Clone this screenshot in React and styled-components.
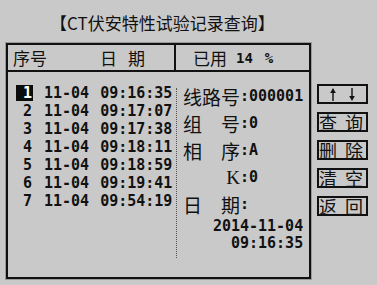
import React from 'react';
import styled, { createGlobalStyle } from 'styled-components';

const CJK = `"Noto Sans CJK SC", "Noto Sans", sans-serif`;
const MONO = `"DejaVu Sans Mono", "Liberation Mono", monospace`;
const SERIF = `"Liberation Serif", "Noto Sans CJK SC", serif`;

const GlobalStyle = createGlobalStyle`
  html, body { margin: 0; padding: 0; background: #c9c9c9; }
  body { width: 377px; height: 285px; overflow: hidden; color: #111; font-family: ${CJK}; }
`;

const Screen = styled.div`
  width: 377px;
  height: 285px;
  display: flex;
  flex-direction: column;
`;

const Title = styled.h1`
  margin: 0;
  height: 43px;
  box-sizing: border-box;
  padding: 2px 0 0 50px;
  display: flex;
  align-items: center;
  font: 400 17px/20px ${CJK};
  white-space: nowrap;
`;

const Body = styled.div`
  display: flex;
  align-items: flex-start;
  padding-left: 6px;
`;

const Panel = styled.div`
  width: 305px;
  height: 236px;
  box-sizing: border-box;
  border: 2px solid #111;
  box-shadow: 0 0 0 1px #9a9a9a;
  display: flex;
  flex-direction: column;
`;

const Header = styled.div`
  flex: none;
  display: flex;
  height: 27px;
  box-sizing: border-box;
  border-bottom: 2px solid #111;
`;

const HeadCell = styled.div`
  display: flex;
  align-items: center;
  box-sizing: border-box;
  width: ${p => p.$w || 'auto'};
  flex: ${p => (p.$w ? 'none' : '1')};
  padding-left: ${p => p.$pad}px;
  border-right: ${p => (p.$divider ? '2px solid #111' : 'none')};
  font: 400 17px/1 ${CJK};
  white-space: nowrap;
`;

const HeadText = styled.span`
  margin-left: ${p => p.$ml || 0}px;
`;

const Usage = styled.span`
  font: 700 14px/1 ${MONO};
  margin-left: ${p => p.$ml || 0}px;
`;

const Content = styled.div`
  flex: 1;
  display: flex;
  align-items: flex-start;
`;

const List = styled.div`
  width: 168px;
  flex: none;
  box-sizing: border-box;
  padding: 12px 0 0 8px;
  display: flex;
  flex-direction: column;
`;

const Row = styled.div`
  height: 18px;
  display: flex;
  align-items: center;
  font: 700 15px/1 ${MONO};
  white-space: nowrap;
`;

const Num = styled.span`
  width: 17px;
  height: 16px;
  display: flex;
  align-items: center;
  justify-content: flex-end;
  padding-right: 1px;
  box-sizing: border-box;
  background: ${p => (p.$sel ? '#0c0c0c' : 'transparent')};
  color: ${p => (p.$sel ? '#fff' : '#111')};
`;

const Cell = styled.span`
  margin-left: 11px;
`;

const Divider = styled.div`
  flex: none;
  width: 0;
  height: 170px;
  margin-top: 16px;
  border-left: 1px dotted #555;
`;

const Info = styled.div`
  flex: 1;
  box-sizing: border-box;
  padding: 11px 7px 0 6px;
  display: flex;
  flex-direction: column;
`;

const Field = styled.div`
  height: 27px;
  display: flex;
  align-items: center;
`;

const Label = styled.span`
  width: 57px;
  display: flex;
  justify-content: ${p => (p.$end ? 'flex-end' : 'space-between')};
  font: 400 19px/1 ${p => (p.$serif ? SERIF : CJK)};
`;

const Colon = styled.span`
  width: 9px;
  font: 700 15px/1 ${MONO};
`;

const Value = styled.span`
  font: 700 15px/1 ${MONO};
`;

const DateLine = styled.div`
  height: 17px;
  text-align: right;
  font: 700 15px/17px ${MONO};
`;

const Buttons = styled.div`
  margin: 41px 0 0 6px;
  display: flex;
  flex-direction: column;
  gap: 8px;
`;

const Button = styled.div`
  width: 51px;
  height: 20px;
  box-sizing: border-box;
  border: 2px solid #111;
  display: flex;
  align-items: center;
  justify-content: ${p => (p.$center ? 'center' : 'space-between')};
  gap: ${p => (p.$center ? '11px' : '0')};
  padding: ${p => (p.$center ? '0' : '0 3px 0 0')};
  font: 400 18px/1 ${CJK};
`;

const Arrow = ({ down }) => (
  <svg width="8" height="13" viewBox="0 0 8 13" style={down ? { transform: 'scaleY(-1)' } : undefined}>
    <line x1="4" y1="4" x2="4" y2="13" stroke="#111" strokeWidth="1.4" />
    <polygon points="1.2,5 4,0 6.8,5" fill="#111" />
  </svg>
);

const records = [
  ['1', '11-04', '09:16:35'],
  ['2', '11-04', '09:17:07'],
  ['3', '11-04', '09:17:38'],
  ['4', '11-04', '09:18:11'],
  ['5', '11-04', '09:18:59'],
  ['6', '11-04', '09:19:41'],
  ['7', '11-04', '09:54:19'],
];

export default function App() {
  return (
    <Screen>
      <GlobalStyle />
      <Title>【CT伏安特性试验记录查询】</Title>
      <Body>
        <Panel>
          <Header>
            <HeadCell $w="168px" $pad={5} $divider>
              <HeadText>序号</HeadText>
              <HeadText $ml={53}>日</HeadText>
              <HeadText $ml={11}>期</HeadText>
            </HeadCell>
            <HeadCell $pad={17}>
              <HeadText>已用</HeadText>
              <Usage $ml={9}>14</Usage>
              <Usage $ml={12}>%</Usage>
            </HeadCell>
          </Header>
          <Content>
            <List>
              {records.map(([n, d, t], i) => (
                <Row key={n}>
                  <Num $sel={i === 0}>{n}</Num>
                  <Cell>{d}</Cell>
                  <Cell>{t}</Cell>
                </Row>
              ))}
            </List>
            <Divider />
            <Info>
              <Field>
                <Label><span>线</span><span>路</span><span>号</span></Label>
                <Colon>:</Colon>
                <Value>000001</Value>
              </Field>
              <Field>
                <Label><span>组</span><span>号</span></Label>
                <Colon>:</Colon>
                <Value>0</Value>
              </Field>
              <Field>
                <Label><span>相</span><span>序</span></Label>
                <Colon>:</Colon>
                <Value>A</Value>
              </Field>
              <Field>
                <Label $end $serif>K</Label>
                <Colon>:</Colon>
                <Value>0</Value>
              </Field>
              <Field>
                <Label><span>日</span><span>期</span></Label>
                <Colon>:</Colon>
              </Field>
              <DateLine>2014-11-04</DateLine>
              <DateLine>09:16:35</DateLine>
            </Info>
          </Content>
        </Panel>
        <Buttons>
          <Button $center>
            <Arrow />
            <Arrow down />
          </Button>
          <Button><span>查</span><span>询</span></Button>
          <Button><span>删</span><span>除</span></Button>
          <Button><span>清</span><span>空</span></Button>
          <Button><span>返</span><span>回</span></Button>
        </Buttons>
      </Body>
    </Screen>
  );
}
